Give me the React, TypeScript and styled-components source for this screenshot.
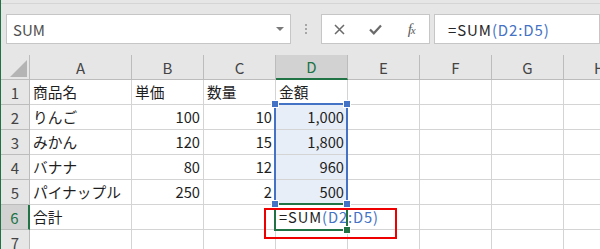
import React, { FC } from 'react';
import styled, { createGlobalStyle, css } from 'styled-components';

const GREEN = '#217346';
const BLUE = '#4472c4';
const GRID = '#d4d4d4';
const HEAD_LINE = '#bcbcbc';

const GlobalStyle = createGlobalStyle`
  html, body {
    margin: 0;
    padding: 0;
    background: #e6e6e6;
  }
  body {
    font-family: "Noto Sans CJK JP", "Liberation Sans", sans-serif;
  }
`;

const Window = styled.div`
  width: 599px;
  height: 249px;
  overflow: hidden;
  border-left: 1px solid ${GREEN};
  background: #e6e6e6;
  display: flex;
  flex-direction: column;
`;

const FormulaBar = styled.div`
  box-sizing: border-box;
  height: 52px;
  margin-top: 3px;
  border-top: 1px solid #d5d5d5;
  padding: 10px 0 0 5px;
  display: flex;
  align-items: flex-start;
  flex-shrink: 0;
`;

const Box = styled.div`
  box-sizing: border-box;
  height: 30px;
  background: #ffffff;
  border: 1px solid #c6c6c6;
  display: flex;
  align-items: center;
`;

const NameBox = styled(Box)`
  width: 285px;
  padding: 0 6px 0 6px;
  justify-content: space-between;
  font-size: 15px;
  color: #505050;
`;

const DropArrow = styled.span`
  width: 0;
  height: 0;
  border-left: 4px solid transparent;
  border-right: 4px solid transparent;
  border-top: 4px solid #7a7a7a;
`;

const Grip = styled.div`
  width: 30px;
  height: 30px;
  display: flex;
  flex-direction: column;
  align-items: center;
  justify-content: center;
  gap: 2px;
  span {
    width: 2px;
    height: 2px;
    background: #a6a6a6;
  }
`;

const ButtonBox = styled(Box)`
  width: 109px;
`;

const IconSlot = styled.div`
  width: 36px;
  height: 28px;
  display: flex;
  align-items: center;
  justify-content: center;
  color: #6a6a6a;
`;

const Fx = styled.span`
  font-family: "Liberation Serif", serif;
  font-style: italic;
  font-size: 15px;
  color: #5a5a5a;
  letter-spacing: -1px;
  small {
    font-size: 11px;
  }
`;

const FormulaInput = styled(Box)`
  flex: 1;
  margin-left: 4px;
  padding-left: 13px;
  font-size: 15px;
  color: #262626;
  white-space: nowrap;
`;

const FormulaText = styled.span`
  letter-spacing: 0.9px;
`;

const Ref = styled.span`
  color: ${BLUE};
`;

const Sheet = styled.div`
  position: relative;
  display: grid;
  grid-template-columns: 29px 102px repeat(7, 72px);
  grid-auto-rows: 25px;
  width: 635px;
  background: #ffffff;
  font-size: 14.7px;
  color: #1e1e1e;
`;

const Corner = styled.div`
  box-sizing: border-box;
  position: relative;
  background: #e6e6e6;
  border-right: 1px solid ${HEAD_LINE};
  border-bottom: 1px solid ${HEAD_LINE};
  &::after {
    content: '';
    position: absolute;
    right: 2px;
    bottom: 2px;
    width: 17px;
    height: 17px;
    background: #b4b4b4;
    clip-path: polygon(100% 0, 100% 100%, 0 100%);
  }
`;

const ColHead = styled.div<{ $active?: boolean }>`
  box-sizing: border-box;
  background: #e6e6e6;
  border-right: 1px solid ${HEAD_LINE};
  border-bottom: 1px solid ${HEAD_LINE};
  display: flex;
  align-items: center;
  justify-content: center;
  font-size: 15px;
  color: #444444;
  ${({ $active }) => $active && css`
    background: #d2d2d2;
    border-bottom: 2px solid ${GREEN};
    color: ${GREEN};
  `}
`;

const RowHead = styled.div<{ $active?: boolean }>`
  box-sizing: border-box;
  background: #e6e6e6;
  border-right: 1px solid ${HEAD_LINE};
  border-bottom: 1px solid ${HEAD_LINE};
  display: flex;
  align-items: center;
  justify-content: center;
  font-size: 15px;
  color: #444444;
  ${({ $active }) => $active && css`
    background: #d2d2d2;
    border-right: 2px solid ${GREEN};
    color: ${GREEN};
  `}
`;

const Cell = styled.div<{ $right?: boolean; $tint?: boolean }>`
  box-sizing: border-box;
  border-right: 1px solid ${GRID};
  border-bottom: 1px solid ${GRID};
  padding: 0 3px 0 3px;
  line-height: 24px;
  white-space: nowrap;
  overflow: visible;
  text-align: ${({ $right }) => ($right ? 'right' : 'left')};
  background: ${({ $tint }) => ($tint ? '#e8eef8' : 'transparent')};
`;

const Frame = styled.div<{ $color: string; $w: number }>`
  position: absolute;
  box-sizing: border-box;
  border: ${({ $w }) => $w}px solid ${({ $color }) => $color};
  pointer-events: none;
`;

const Handle = styled.div<{ $color: string }>`
  position: absolute;
  width: 6px;
  height: 6px;
  margin: -3px 0 0 -3px;
  background: ${({ $color }) => $color};
  outline: 1px solid #ffffff;
`;

const columns = ['A', 'B', 'C', 'D', 'E', 'F', 'G', 'H'];

const rows: string[][] = [
  ['商品名', '単価', '数量', '金額'],
  ['りんご', '100', '10', '1,000'],
  ['みかん', '120', '15', '1,800'],
  ['バナナ', '80', '12', '960'],
  ['パイナップル', '250', '2', '500'],
  ['合計', '', '', ''],
  ['', '', '', ''],
];

const Formula: FC = () => (
  <FormulaText>
    =SUM<Ref>(D2:D5)</Ref>
  </FormulaText>
);

const App: FC = () => (
  <Window>
    <GlobalStyle />
    <FormulaBar>
      <NameBox>
        <span>SUM</span>
        <DropArrow />
      </NameBox>
      <Grip>
        <span />
        <span />
        <span />
      </Grip>
      <ButtonBox>
        <IconSlot>
          <svg width='11' height='11' viewBox='0 0 11 11'>
            <path d='M1 1 L10 10 M10 1 L1 10' stroke='#6a6a6a' strokeWidth='1.5' fill='none' />
          </svg>
        </IconSlot>
        <IconSlot>
          <svg width='13' height='11' viewBox='0 0 13 11'>
            <path d='M1 5.5 L4.8 9.3 L12 1.5' stroke='#6a6a6a' strokeWidth='2.2' fill='none' />
          </svg>
        </IconSlot>
        <IconSlot>
          <Fx>f<small>x</small></Fx>
        </IconSlot>
      </ButtonBox>
      <FormulaInput>
        <Formula />
      </FormulaInput>
    </FormulaBar>
    <Sheet>
      <Corner />
      {columns.map((c) => (
        <ColHead key={c} $active={c === 'D'}>{c}</ColHead>
      ))}
      {rows.map((r, i) => {
        const n = i + 1;
        return (
          <React.Fragment key={n}>
            <RowHead $active={n === 6}>{n}</RowHead>
            <Cell>{r[0]}</Cell>
            <Cell $right={n > 1}>{r[1]}</Cell>
            <Cell $right={n > 1}>{r[2]}</Cell>
            <Cell $right={n > 1 && n < 6} $tint={n >= 2 && n <= 5}>
              {n === 6 ? <Formula /> : r[3]}
            </Cell>
            <Cell />
            <Cell />
            <Cell />
            <Cell />
          </React.Fragment>
        );
      })}
      <Frame $color={BLUE} $w={2} style={{ left: 273, top: 48, width: 74, height: 102 }} />
      <Frame $color={GREEN} $w={2} style={{ left: 273, top: 148, width: 74, height: 28 }} />
      <Handle $color={BLUE} style={{ left: 274, top: 49 }} />
      <Handle $color={BLUE} style={{ left: 346, top: 49 }} />
      <Handle $color={BLUE} style={{ left: 274, top: 149 }} />
      <Handle $color={BLUE} style={{ left: 346, top: 149 }} />
      <Handle $color={GREEN} style={{ left: 346, top: 175 }} />
      <Frame $color='#ee0000' $w={2} style={{ left: 263, top: 153, width: 133, height: 31 }} />
    </Sheet>
  </Window>
);

export default App;
